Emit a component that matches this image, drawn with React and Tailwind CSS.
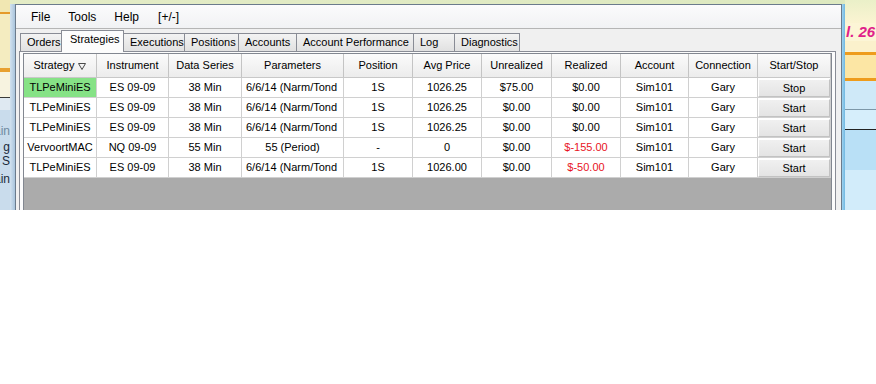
import { useState } from 'react';

const columns = [
  { label: 'Strategy', w: 'w-[73px]', sort: true },
  { label: 'Instrument', w: 'w-[72px]' },
  { label: 'Data Series', w: 'w-[73px]' },
  { label: 'Parameters', w: 'w-[102px]' },
  { label: 'Position', w: 'w-[69px]' },
  { label: 'Avg Price', w: 'w-[69px]' },
  { label: 'Unrealized', w: 'w-[70px]' },
  { label: 'Realized', w: 'w-[69px]' },
  { label: 'Account', w: 'w-[68px]' },
  { label: 'Connection', w: 'w-[69px]' },
  { label: 'Start/Stop', w: 'w-[73px]' },
];

const rows = [
  { strategy: 'TLPeMiniES', instrument: 'ES 09-09', series: '38 Min', params: '6/6/14 (Narm/Tond', longParams: true, position: '1S', avg: '1026.25', unrealized: '$75.00', realized: '$0.00', account: 'Sim101', connection: 'Gary', running: true },
  { strategy: 'TLPeMiniES', instrument: 'ES 09-09', series: '38 Min', params: '6/6/14 (Narm/Tond', longParams: true, position: '1S', avg: '1026.25', unrealized: '$0.00', realized: '$0.00', account: 'Sim101', connection: 'Gary' },
  { strategy: 'TLPeMiniES', instrument: 'ES 09-09', series: '38 Min', params: '6/6/14 (Narm/Tond', longParams: true, position: '1S', avg: '1026.25', unrealized: '$0.00', realized: '$0.00', account: 'Sim101', connection: 'Gary' },
  { strategy: 'VervoortMAC', instrument: 'NQ 09-09', series: '55 Min', params: '55 (Period)', position: '-', avg: '0', unrealized: '$0.00', realized: '$-155.00', loss: true, account: 'Sim101', connection: 'Gary' },
  { strategy: 'TLPeMiniES', instrument: 'ES 09-09', series: '38 Min', params: '6/6/14 (Narm/Tond', longParams: true, position: '1S', avg: '1026.00', unrealized: '$0.00', realized: '$-50.00', loss: true, account: 'Sim101', connection: 'Gary' },
];

const tabs = [
  { label: 'Orders', w: 'w-[42px]' },
  { label: 'Strategies', w: 'w-[63px]' },
  { label: 'Executions', w: 'w-[62px]' },
  { label: 'Positions', w: 'w-[55px]' },
  { label: 'Accounts', w: 'w-[59px]' },
  { label: 'Account Performance', w: 'w-[118px]' },
  { label: 'Log', w: 'w-[42px]' },
  { label: 'Diagnostics', w: 'w-[66px]' },
];

function SortGlyph() {
  return (
    <svg width="8" height="7" viewBox="0 0 8 7" className="ml-[4px] mt-[1px]">
      <polygon points="0.5,0.5 7.5,0.5 4,6.5" fill="none" stroke="#4a4a4a" strokeWidth="1" />
    </svg>
  );
}

// bits of the app behind the window, left side
function LeftDesktop() {
  return (
    <div className="w-[10px] flex flex-col overflow-hidden text-[12px] text-[#1a2a3a]">
      <div className="h-[12px] bg-[#f1e7b2]" />
      <div className="h-[2px] bg-[#e59a2a]" />
      <div className="h-[54px] bg-[#f4ecc0]" />
      <div className="h-[4px] bg-[#e8a030]" />
      <div className="h-[25px] bg-[#f7f3e0]" />
      <div className="h-[1px] bg-[#3a3a3a]" />
      <div className="h-[12px] bg-[#dfe9f2]" />
      <div className="flex-1 bg-[#c9dcec] flex flex-col items-end leading-[14px]">
        <span className="whitespace-nowrap text-[#6f8aa0] mt-[14px]">ain</span>
        <span className="whitespace-nowrap mt-[2px]">g</span>
        <span className="whitespace-nowrap">S</span>
        <span className="whitespace-nowrap mt-[4px]">ain</span>
      </div>
    </div>
  );
}

// right side
function RightDesktop() {
  return (
    <div className="w-[31px] flex flex-col overflow-hidden">
      <div className="h-[23px] bg-gradient-to-b from-[#eaf0c8] to-[#fbf4d2]" />
      <div className="h-[18px] bg-[#fcf5d6] text-[15px] leading-[18px] italic font-bold text-[#e0208a] whitespace-nowrap pl-[1px]">l. 26</div>
      <div className="h-[11px] bg-[#fbf1cc]" />
      <div className="h-[3px] bg-[#ee9c1c]" />
      <div className="h-[23px] bg-[#fce6a4]" />
      <div className="h-[3px] bg-[#ee9c1c]" />
      <div className="h-[28px] bg-[#cfe9f8]" />
      <div className="h-[1px] bg-[#7d97a8]" />
      <div className="h-[19px] bg-[#d6eefb]" />
      <div className="h-[1px] bg-[#222]" />
      <div className="h-[40px] bg-[#b9e0f6]" />
      <div className="flex-1 bg-[#d2ecfa]" />
    </div>
  );
}

function Cell({ w, children, className = '' }) {
  return (
    <div className={`${w} shrink-0 h-full border-r border-[#d0d0d0] flex items-center overflow-hidden whitespace-nowrap ${className}`}>
      {children}
    </div>
  );
}

function App() {
  const [active, setActive] = useState('Strategies');
  const [running, setRunning] = useState(rows.map((r) => !!r.running));

  const toggle = (i) => setRunning((prev) => prev.map((v, j) => (j === i ? !v : v)));

  return (
    <div className="w-[876px] h-[384px] bg-white overflow-hidden font-['Liberation_Sans',Arial,sans-serif] text-black">
      <div className="flex h-[210px]">
        <LeftDesktop />

        {/* window frame */}
        <div className="w-[835px] flex flex-col bg-gradient-to-r from-[#c6d9ea] to-[#bcd6e8]">
          <div className="h-[4px] bg-gradient-to-r from-[#e4ecc6] to-[#dde9c0]" />
          <div className="flex flex-1 min-h-0">
            <div className="w-[5px] bg-gradient-to-r from-[#d2e2ef] to-[#a9c4dc]" />
            <div className="w-[827px] flex flex-col bg-[#f0f0f0] border-l border-r border-t border-[#6b7b8c]">
              {/* menu bar */}
              <div className="h-[24px] shrink-0 bg-gradient-to-b from-[#fbfbfc] to-[#f1f2f4] border-b border-[#b5b5b5] flex items-center pl-[15px] gap-[18px] text-[12px]">
                <span>File</span>
                <span>Tools</span>
                <span>Help</span>
                <span className="ml-[1px]">[+/-]</span>
              </div>

              {/* tabs */}
              <div className="h-[22px] shrink-0 flex items-end pl-[4px] text-[11px] relative z-10">
                {tabs.map((t, i) => {
                  const sel = t.label === active;
                  return (
                    <button
                      key={t.label}
                      onClick={() => setActive(t.label)}
                      className={`${t.w} ${i > 0 ? '-ml-px' : ''} shrink-0 text-left pl-[6px] border-l border-t border-r border-[#898c95] ${
                        sel
                          ? 'h-[22px] bg-[#fcfcfc] relative z-10 -mb-px pb-[4px] pl-[8px]'
                          : 'h-[18px] bg-gradient-to-b from-[#f3f3f3] to-[#e1e1e1]'
                      }`}
                    >
                      {t.label}
                    </button>
                  );
                })}
              </div>

              {/* tab page */}
              <div className="ml-[3px] w-[817px] flex-1 min-h-0 flex flex-col bg-[#fcfcfc] border-l border-r border-t border-[#898c95] px-[3px] pt-[1px]">
                <div className="flex-1 flex flex-col border border-b-0 border-[#828790] bg-[#ababab] text-[11px]">
                  {/* header */}
                  <div className="h-[24px] shrink-0 flex bg-gradient-to-b from-[#fbfbfb] to-[#ececec] border-b border-[#c8c8c8]">
                    {columns.map((c) => (
                      <div key={c.label} className={`${c.w} shrink-0 h-full border-r border-[#c4c4c4] flex items-center justify-center whitespace-nowrap`}>
                        {c.label}
                        {c.sort && <SortGlyph />}
                      </div>
                    ))}
                  </div>

                  {/* rows */}
                  {rows.map((r, i) => (
                    <div key={i} className="h-[20px] shrink-0 flex bg-white border-b border-[#d0d0d0]">
                      <Cell w="w-[73px]" className={`justify-center ${i === 0 ? 'bg-[#86e286]' : ''}`}>{r.strategy}</Cell>
                      <Cell w="w-[72px]" className="justify-center">{r.instrument}</Cell>
                      <Cell w="w-[73px]" className="justify-center">{r.series}</Cell>
                      <Cell w="w-[102px]" className={r.longParams ? 'justify-start pl-[4px]' : 'justify-center'}>{r.params}</Cell>
                      <Cell w="w-[69px]" className="justify-center">{r.position}</Cell>
                      <Cell w="w-[69px]" className="justify-center">{r.avg}</Cell>
                      <Cell w="w-[70px]" className="justify-center">{r.unrealized}</Cell>
                      <Cell w="w-[69px]" className={`justify-center ${r.loss ? 'text-[#e8141e]' : ''}`}>{r.realized}</Cell>
                      <Cell w="w-[68px]" className="justify-center">{r.account}</Cell>
                      <Cell w="w-[69px]" className="justify-center">{r.connection}</Cell>
                      <Cell w="w-[73px]" className="items-stretch">
                        <button
                          onClick={() => toggle(i)}
                          className="flex-1 flex items-center justify-center mt-[1px] bg-gradient-to-b from-[#f0f0f0] to-[#e4e4e4] border-t border-l border-white border-r border-b border-r-[#c2c2c2] border-b-[#c2c2c2]"
                        >
                          {running[i] ? 'Stop' : 'Start'}
                        </button>
                      </Cell>
                    </div>
                  ))}
                  <div className="flex-1" />
                </div>
              </div>
            </div>
            <div className="w-[3px] bg-gradient-to-r from-[#9fd2ee] to-[#6fb8e2]" />
          </div>
        </div>

        <RightDesktop />
      </div>
    </div>
  );
}

export default App;
